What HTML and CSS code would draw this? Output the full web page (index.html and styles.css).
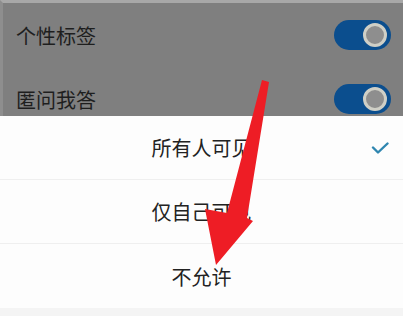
FILE: index.html
```html
<!DOCTYPE html>
<html lang="zh-CN">
<head>
    <meta charset="UTF-8">
    <meta name="viewport" content="width=device-width, initial-scale=1.0">
    <title>可见范围</title>
    <link rel="stylesheet" href="styles.css">
</head>
<body>

    <div class="settings">
        <div class="setting-row">
            <span class="setting-label">个性标签</span>
            <span class="toggle"><span class="knob"></span></span>
        </div>
        <div class="setting-row">
            <span class="setting-label">匿问我答</span>
            <span class="toggle"><span class="knob"></span></span>
        </div>
    </div>

    <div class="sheet">
        <div class="option selected">
            <span class="option-text">所有人可见</span>
            <svg class="check" width="18" height="12" viewBox="0 0 18 12">
                <path d="M2 5.5 L7 10.5 L16.5 1.5" fill="none" stroke="#2f86b0" stroke-width="2.4" stroke-linecap="round" stroke-linejoin="round"/>
            </svg>
        </div>
        <div class="option">
            <span class="option-text">仅自己可见</span>
        </div>
        <div class="option last">
            <span class="option-text">不允许</span>
        </div>
        <div class="sheet-footer"></div>
    </div>

    <!-- red annotation arrow drawn over the page -->
    <svg class="arrow" width="403" height="316" viewBox="0 0 403 316">
        <polygon points="262,80 269,82 247,218 253,221 216,265 205,209 227,213" fill="#ee1d25"/>
    </svg>

</body>
</html>
```

FILE: styles.css
```css
body {
    margin: 0;
    width: 403px;
    height: 316px;
    overflow: hidden;
    position: relative;
    background-color: #fdfdfd;
    font-family: "Noto Sans CJK SC", "Noto Sans", sans-serif;
}

.settings {
    box-sizing: border-box;
    height: 116px;
    overflow: hidden;
    background-color: #7f7f7f;
    border-top: 3px solid #a8a8a8;
    border-left: 3px solid #8e8e8e;
}

.setting-row {
    height: 64px;
    display: flex;
    align-items: center;
    justify-content: space-between;
    padding: 0 12px 0 13px;
}

.setting-label {
    font-size: 20px;
    color: #1e1e1e;
}

.toggle {
    box-sizing: border-box;
    width: 57px;
    height: 30px;
    border-radius: 15px;
    background-color: #0b4e8e;
    display: flex;
    align-items: center;
    justify-content: flex-end;
    padding-right: 4px;
}

.knob {
    box-sizing: border-box;
    width: 24px;
    height: 24px;
    border-radius: 50%;
    background-color: #8e8e8e;
    border: 3px solid #cfcfc6;
}

.sheet {
    background-color: #fdfdfd;
}

.option {
    height: 63px;
    display: grid;
    grid-template-columns: 1fr auto 1fr;
    align-items: center;
    border-bottom: 1px solid #efefef;
}

.option.last {
    height: 64px;
    border-bottom: none;
}

.option-text {
    grid-column: 2;
    font-size: 20px;
    color: #222;
}

.check {
    grid-column: 3;
    justify-self: end;
    margin-right: 14px;
}

.sheet-footer {
    height: 9px;
    background-color: #f4f4f4;
}

.arrow {
    position: absolute;
    left: 0;
    top: 0;
    pointer-events: none;
}
```
